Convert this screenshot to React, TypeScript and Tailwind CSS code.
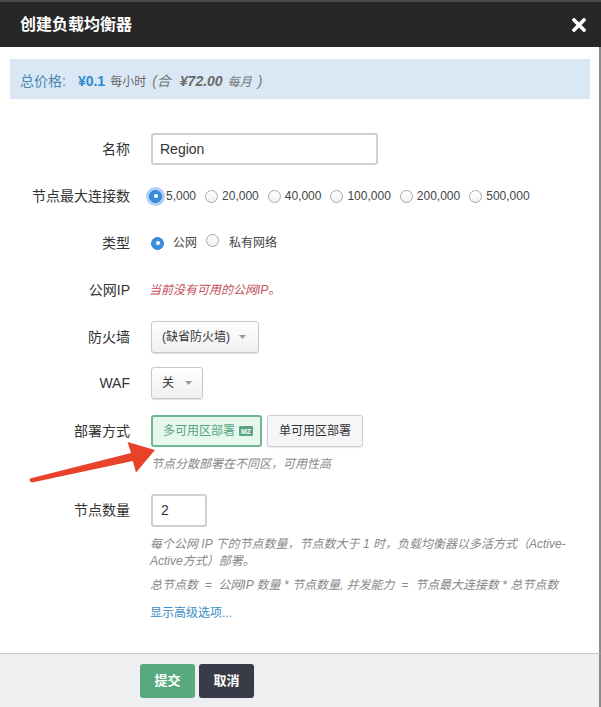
import React from "react";

const FONT = "[font-family:'Liberation_Sans','Noto_Sans_CJK_SC',sans-serif]";

function Radio({ checked, glow }: { checked?: boolean; glow?: boolean }) {
  if (checked) {
    return (
      <span
        className={`inline-flex items-center justify-center w-[13px] h-[13px] rounded-full bg-[#3b8de0] border border-[#2f7fd1] shrink-0 ${
          glow ? "shadow-[0_0_0_3px_rgba(110,170,235,0.55)]" : ""
        }`}
      >
        <span className="w-[4px] h-[4px] rounded-full bg-white" />
      </span>
    );
  }
  return (
    <span className="inline-block w-[13px] h-[13px] rounded-full border border-[#a8a8a8] bg-gradient-to-b from-white to-[#f1f1f1] shrink-0" />
  );
}

function Caret() {
  return (
    <svg width="7" height="4" viewBox="0 0 7 4" className="shrink-0">
      <path d="M0 0 L7 0 L3.5 4 Z" fill="#9a9a9a" />
    </svg>
  );
}

function Row({ label, children, className = "" }: { label: string; children: React.ReactNode; className?: string }) {
  return (
    <div className={`flex items-center h-8 ${className}`}>
      <div className="w-[130px] shrink-0 text-right text-[14px] text-[#333]">{label}</div>
      <div className="ml-[21px] flex items-center">{children}</div>
    </div>
  );
}

export default function App() {
  const conns = ["5,000", "20,000", "40,000", "100,000", "200,000", "500,000"];
  return (
    <div className={`${FONT} relative w-[601px] h-[707px] flex flex-col bg-white overflow-hidden`}>
      {/* Header */}
      <div className="h-[47px] shrink-0 bg-[#272727] border-t-2 border-[#4a4a4a] flex items-center justify-between pl-[20px] pr-[15px]">
        <div className="text-white text-[16px] font-bold">创建负载均衡器</div>
        <svg width="14" height="14" viewBox="0 0 14 14">
          <path d="M2 2 L12 12 M12 2 L2 12" stroke="#ffffff" strokeWidth="3.6" strokeLinecap="square" />
        </svg>
      </div>

      {/* Body */}
      <div className="flex-1 flex flex-col border-r-2 border-[#8a8a8a] pt-[12px]">
        <div className="mx-[10px] mr-[9px] h-[40px] bg-[#d9e8f4] flex items-baseline pt-[12px] pl-[10px] text-[14px]">
          <span className="text-[#4a86b0]">总价格:</span>
          <span className="ml-[12px] font-bold text-[#2f8bd0]">¥0.1</span>
          <span className="ml-[5px] text-[12px] text-[#666]">每小时</span>
          <span className="ml-[6px] italic text-[#777]">(合</span>
          <span className="ml-[9px] italic font-bold text-[#6a6a6a]">¥72.00</span>
          <span className="ml-[5px] italic text-[12px] text-[#777]">每月</span>
          <span className="ml-[6px] italic text-[#777]">)</span>
        </div>

        <Row label="名称" className="mt-[34px]">
          <div className="w-[227px] h-8 border-2 border-[#cfcfcf] rounded-[3px] flex items-center pl-[7px] text-[14px] text-[#333]">
            Region
          </div>
        </Row>

        <Row label="节点最大连接数" className="mt-[15px]">
          <div className="flex items-center text-[12px] text-[#444]">
            {conns.map((c, i) => (
              <div key={c} className={`flex items-center ${i > 0 ? "ml-[9px]" : "ml-[-2px]"}`}>
                <Radio checked={i === 0} glow={i === 0} />
                <span className="ml-[4px]">{c}</span>
              </div>
            ))}
          </div>
        </Row>

        <Row label="类型" className="mt-[15px]">
          <div className="flex items-center text-[12px] text-[#444]">
            <Radio checked />
            <span className="ml-[9px]">公网</span>
            <span className="ml-[9px]">
              <Radio />
            </span>
            <span className="ml-[10px]">私有网络</span>
          </div>
        </Row>

        <Row label="公网IP" className="mt-[15px]">
          <span className="italic text-[12px] text-[#c2505c] ml-[-2px]">当前没有可用的公网IP。</span>
        </Row>

        <Row label="防火墙" className="mt-[15px]">
          <div className="w-[108px] h-8 border border-[#c8c8c8] rounded-[3px] bg-gradient-to-b from-white to-[#f0f0f0] shadow-[0_1px_1px_rgba(0,0,0,0.12)] flex items-center pl-[10px] text-[12px] text-[#333]">
            <span>(缺省防火墙)</span>
            <span className="ml-[9px]">
              <Caret />
            </span>
          </div>
        </Row>

        <Row label="WAF" className="mt-[14px]">
          <div className="w-[52px] h-8 border border-[#c8c8c8] rounded-[3px] bg-gradient-to-b from-white to-[#f0f0f0] shadow-[0_1px_1px_rgba(0,0,0,0.12)] flex items-center pl-[10px] text-[12px] text-[#333]">
            <span>关</span>
            <span className="ml-[11px]">
              <Caret />
            </span>
          </div>
        </Row>

        <Row label="部署方式" className="mt-[16px]">
          <div className="flex items-center">
            <div className="w-[111px] h-8 border-2 border-[#6fb696] rounded-[3px] bg-[#e6f7ee] flex items-center pl-[10px] text-[12px] text-[#55a57f]">
              <span>多可用区部署</span>
              <span className="ml-[4px] w-[14px] h-[10px] bg-[#5aa57f] rounded-[1px] flex items-center justify-center text-[7px] leading-none font-bold text-white">
                MZ
              </span>
            </div>
            <div className="ml-[5px] w-[96px] h-8 border border-[#cdcdd3] rounded-[3px] bg-[#f6f6f9] flex items-center justify-center text-[12px] text-[#333] shadow-[0_1px_1px_rgba(0,0,0,0.08)]">
              单可用区部署
            </div>
          </div>
        </Row>

        <div className="ml-[151px] mt-[9px] h-[16px] leading-[16px] italic text-[12px] text-[#888]">
          节点分散部署在不同区，可用性高
        </div>

        <Row label="节点数量" className="mt-[22px]">
          <div className="w-[56px] h-[33px] border-2 border-[#cfcfcf] rounded-[3px] flex items-center pl-[8px] text-[14px] text-[#333]">
            2
          </div>
        </Row>

        <div className="ml-[150px] mt-[10px] italic text-[12px] leading-[17px] text-[#888]">
          <div>每个公网 IP 下的节点数量，节点数大于 1 时，负载均衡器以多活方式（Active-</div>
          <div>Active方式）部署。</div>
          <div className="mt-[7px] whitespace-pre">总节点数  =  公网IP 数量 * 节点数量, 并发能力  =  节点最大连接数 * 总节点数</div>
        </div>
        <div className="ml-[150px] mt-[11px] text-[12px] leading-[17px] text-[#3b8cc4]">显示高级选项...</div>
      </div>

      {/* Footer */}
      <div className="h-[54px] shrink-0 bg-[#efeff1] border-t border-[#c9c9c9] border-r-2 border-r-[#8a8a8a] flex items-start pt-[10px] pl-[140px]">
        <div className="w-[55px] h-[34px] rounded-[3px] bg-[#58aa7e] flex items-center justify-center text-white text-[13px] font-bold">
          提交
        </div>
        <div className="ml-[4px] w-[55px] h-[34px] rounded-[3px] bg-[#383b48] flex items-center justify-center text-white text-[13px] font-bold">
          取消
        </div>
      </div>

      {/* Annotation arrow */}
      <svg className="absolute left-0 top-0 pointer-events-none" width="601" height="707" viewBox="0 0 601 707">
        <path
          d="M30 478.5 L131 453 L127.5 442 L155 450 L136 472.5 L132.8 461 L32 482.5 Q28.5 481 30 478.5 Z"
          fill="#e8432a"
        />
      </svg>
    </div>
  );
}
